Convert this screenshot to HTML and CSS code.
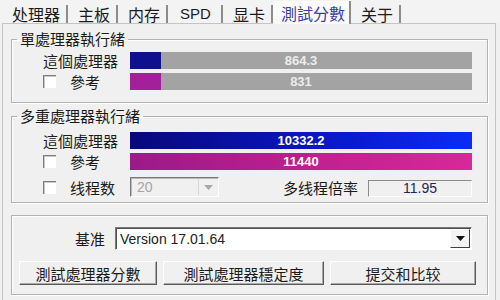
FILE: index.html
```html
<!DOCTYPE html>
<html lang="zh">
<head>
    <meta charset="UTF-8">
    <meta name="viewport" content="width=device-width, initial-scale=1.0">
    <title>CPU-Z 測試分數</title>
    <link rel="stylesheet" href="styles.css">
</head>
<body>

<div class="window">
    <div class="tabs">
        <div class="tab">处理器</div>
        <div class="tab">主板</div>
        <div class="tab">内存</div>
        <div class="tab tab-latin">SPD</div>
        <div class="tab">显卡</div>
        <div class="tab active">測試分數</div>
        <div class="tab">关于</div>
    </div>

    <div class="panel">
        <!-- 单线程 -->
        <fieldset class="group">
            <legend>單處理器執行緒</legend>
            <div class="rows">
                <div class="row">
                    <span class="label">這個處理器</span>
                    <div class="bar">
                        <div class="fill fill-blue" style="width: 9%"></div>
                        <span class="score">864.3</span>
                    </div>
                </div>
                <div class="row">
                    <span class="label"><span class="check"></span>參考</span>
                    <div class="bar">
                        <div class="fill fill-magenta" style="width: 9%"></div>
                        <span class="score">831</span>
                    </div>
                </div>
            </div>
        </fieldset>

        <!-- 多线程 -->
        <fieldset class="group group-multi">
            <legend>多重處理器執行緒</legend>
            <div class="rows">
                <div class="row">
                    <span class="label">這個處理器</span>
                    <div class="bar">
                        <div class="fill fill-blue-grad" style="width: 100%"></div>
                        <span class="score score-white">10332.2</span>
                    </div>
                </div>
                <div class="row">
                    <span class="label"><span class="check"></span>參考</span>
                    <div class="bar">
                        <div class="fill fill-magenta-grad" style="width: 100%"></div>
                        <span class="score score-white">11440</span>
                    </div>
                </div>
                <div class="row row-threads">
                    <span class="label"><span class="check"></span>线程数</span>
                    <div class="combo combo-disabled">
                        <span class="combo-text">20</span>
                        <span class="combo-btn">
                            <svg width="9" height="5" viewBox="0 0 9 5"><polygon points="0,0 9,0 4.5,5" fill="#a8a8a8"/></svg>
                        </span>
                    </div>
                    <span class="ratio-label">多线程倍率</span>
                    <div class="value-box">11.95</div>
                </div>
            </div>
        </fieldset>

        <!-- 基准 / 按钮 -->
        <fieldset class="group group-bench">
            <div class="bench-row">
                <span class="bench-label">基准</span>
                <div class="combo combo-version">
                    <span class="combo-text">Version 17.01.64</span>
                    <span class="combo-btn combo-btn-raised">
                        <svg width="9" height="5" viewBox="0 0 9 5"><polygon points="0,0 9,0 4.5,5" fill="#111"/></svg>
                    </span>
                </div>
            </div>
            <div class="buttons">
                <button class="btn">測試處理器分數</button>
                <button class="btn">測試處理器穩定度</button>
                <button class="btn">提交和比较</button>
            </div>
        </fieldset>
    </div>
</div>

</body>
</html>
```

FILE: styles.css
```css
body {
    margin: 0;
    background: #f0f0f0;
    font-family: "Noto Sans CJK SC", "Noto Sans CJK TC", sans-serif;
    font-size: 15px;
    color: #1b1b1b;
}
.window {
    width: 500px;
    height: 300px;
    overflow: hidden;
    display: flex;
    flex-direction: column;
}

/* pestañas */
.tabs {
    display: flex;
    align-items: flex-end;
    height: 23px;
    padding-left: 2px;
    background: #f3f3f3;
}
.tab {
    height: 18px;
    line-height: 18px;
    padding: 0 6px 0 10px;
    border-right: 2px solid #8c8c8c;
    font-size: 16px;
}
.tab-latin {
    font-family: "Liberation Sans", Arial, sans-serif;
    font-size: 15px;
    padding: 0 10px 0 12px;
}
.tab.active {
    height: 23px;
    line-height: 24px;
    padding: 0 4px 0 8px;
    background: #fbfbfb;
    color: #3c3ca8;
    margin-bottom: -1px;
    position: relative;
}

.panel {
    flex: 1;
    margin: 0 4px 0 2px;
    border: 1px solid #c4c4c4;
    border-bottom: none;
    padding-top: 7px;
}

/* cuadros de grupo */
.group {
    margin: 0 7px 0 8px;
    padding: 0;
    min-width: 0;
    border: 1px solid #b2b2b2;
    box-shadow: inset 1px 1px 0 #fff, 1px 1px 0 #fff;
}
.group legend {
    margin-left: 5px;
    padding: 0 3px;
    line-height: 16px;
}
.rows {
    display: flex;
    flex-direction: column;
    gap: 4px;
    padding: 5px 15px 12px 31px;
}
.group-multi {
    margin-top: 5px;
}
.group-multi .rows {
    padding-top: 8px;
    padding-bottom: 5px;
}
.row {
    display: grid;
    grid-template-columns: 87px 1fr;
    align-items: center;
}
.label {
    display: flex;
    align-items: center;
    line-height: 17px;
    white-space: nowrap;
}
.check {
    width: 12px;
    height: 12px;
    margin-right: 14px;
    background: #fff;
    border-top: 1px solid #7c7c7c;
    border-left: 1px solid #7c7c7c;
    box-shadow: inset 1px 1px 0 #c8c8c8;
}

/* barras */
.bar {
    display: grid;
    height: 17px;
    background: #a3a3a3;
}
.fill {
    grid-area: 1 / 1;
    justify-self: start;
    height: 17px;
}
.fill-blue {
    background: #10108c;
}
.fill-magenta {
    background: #a2209a;
}
.fill-blue-grad {
    background: linear-gradient(to right, #08087a, #0a16c4 55%, #0a2cf6);
}
.fill-magenta-grad {
    background: linear-gradient(to right, #9a1a8a, #c02090 55%, #d8289a);
}
.score {
    grid-area: 1 / 1;
    justify-self: center;
    font-family: "Liberation Sans", Arial, sans-serif;
    font-weight: bold;
    font-size: 13px;
    line-height: 17px;
    color: #ececec;
    position: relative;
}
.score-white {
    color: #fff;
}

/* fila de hilos */
.row-threads {
    grid-template-columns: 87px 89px 1fr 104px;
    margin-top: 3px;
}
.combo {
    display: flex;
    align-items: center;
    border-top: 1px solid #7a7a7a;
    border-left: 1px solid #7a7a7a;
    border-right: 1px solid #fff;
    border-bottom: 1px solid #fff;
    box-shadow: inset 1px 1px 0 #505050;
    background: #fff;
    font-family: "Liberation Sans", Arial, sans-serif;
    font-size: 14px;
}
.combo-text {
    flex: 1;
    padding-left: 6px;
}
.combo-disabled {
    height: 18px;
    background: #f0f0f0;
    box-shadow: inset 1px 1px 0 #b8b8b8;
}
.combo-disabled .combo-text {
    color: #a4a4a4;
}
.combo-btn {
    display: flex;
    align-items: center;
    justify-content: center;
    width: 18px;
    height: 16px;
    margin-right: 1px;
    border-left: 1px solid #d8d8d8;
}
.ratio-label {
    text-align: right;
    padding-right: 10px;
    line-height: 17px;
}
.value-box {
    height: 15px;
    line-height: 15px;
    align-self: end;
    text-align: center;
    font-family: "Liberation Sans", Arial, sans-serif;
    font-size: 14px;
    color: #24245c;
    border-top: 1px solid #8a8a8a;
    border-left: 1px solid #8a8a8a;
    border-right: 1px solid #fff;
    border-bottom: 1px solid #fff;
}

/* grupo inferior */
.group-bench {
    margin-top: 12px;
    padding: 11px 11px 9px 7px;
}
.bench-row {
    display: grid;
    grid-template-columns: 86px 1fr;
    gap: 10px;
    align-items: center;
    margin-right: 4px;
}
.bench-label {
    text-align: right;
}
.combo-version {
    height: 21px;
}
.combo-version .combo-text {
    color: #222;
    padding-left: 4px;
}
.combo-btn-raised {
    width: 18px;
    height: 17px;
    background: #f4f4f4;
    border-left: 1px solid #fff;
    border-top: 1px solid #fff;
    border-right: 1px solid #404040;
    border-bottom: 1px solid #404040;
}
.buttons {
    display: grid;
    grid-template-columns: 138px 161px 1fr;
    gap: 6px;
    margin-top: 11px;
}
.btn {
    height: 24px;
    padding: 0;
    font-family: inherit;
    font-size: 15px;
    color: #1b1b1b;
    background: #f0f0f0;
    border-top: 1px solid #fff;
    border-left: 1px solid #fff;
    border-right: 1px solid #5a5a5a;
    border-bottom: 1px solid #5a5a5a;
    box-shadow: inset -1px -1px 0 #a8a8a8;
}
```
